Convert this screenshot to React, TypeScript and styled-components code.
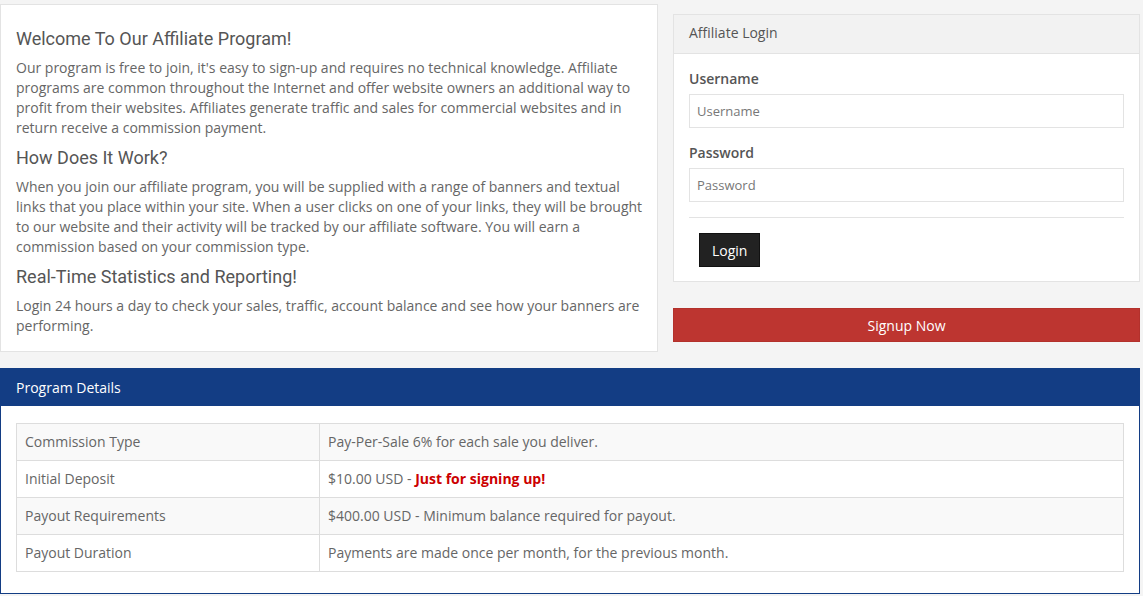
import React from 'react';
import styled, {createGlobalStyle} from 'styled-components';

const TEXT = '#666';
const BORDER = '#e3e3e3';
const NAVY = '#133d84';

const GlobalStyle = createGlobalStyle`
  html, body {
    margin: 0;
    padding: 0;
    background: #f4f4f4;
  }
  body {
    font-family: 'Open Sans', 'Liberation Sans', sans-serif;
    font-size: 14px;
    line-height: 20px;
    color: ${TEXT};
  }
  * {
    box-sizing: border-box;
  }
`;

const Page = styled.div`
  width: 1140px;
  padding-top: 4px;
`;

const TopRow = styled.div`
  display: grid;
  grid-template-columns: 658px 467px;
  column-gap: 15px;
  align-items: start;
`;

const InfoPanel = styled.section`
  background: #fff;
  border: 1px solid ${BORDER};
  padding: 23px 12px 15px 15px;
`;

const Heading = styled.h3`
  font-family: Roboto, 'Liberation Sans', sans-serif;
  font-weight: 400;
  font-size: 18px;
  line-height: 22px;
  color: #555;
  margin: 0 0 8px;
`;

const Text = styled.p`
  margin: 0 0 9px;

  &:last-child {
    margin-bottom: 0;
  }
`;

const SideColumn = styled.div`
  padding-top: 10px;
  display: flex;
  flex-direction: column;
  gap: 26px;
`;

const LoginPanel = styled.section`
  background: #fff;
  border: 1px solid ${BORDER};
`;

const LoginHeader = styled.header`
  background: #f2f2f2;
  border-bottom: 1px solid ${BORDER};
  height: 39px;
  padding: 0 15px 2px;
  display: flex;
  align-items: center;
  color: #555;
`;

const LoginBody = styled.div`
  padding: 15px 15px 14px;
`;

const Field = styled.div`
  display: flex;
  flex-direction: column;
  gap: 5px;
  margin-bottom: 15px;
`;

const Label = styled.label`
  font-weight: 600;
  color: #555;
`;

const Input = styled.input`
  height: 34px;
  border: 1px solid ${BORDER};
  padding: 0 7px;
  font-family: 'Open Sans', 'Liberation Sans', sans-serif;
  font-size: 13px;
  color: #555;
  outline: none;

  &::placeholder {
    color: #777;
  }
`;

const Divider = styled.hr`
  border: 0;
  border-top: 1px solid ${BORDER};
  margin: 0 0 15px;
`;

const LoginButton = styled.button`
  margin-left: 10px;
  height: 34px;
  padding: 0 12px;
  background: #222;
  color: #fff;
  border: 1px solid #111;
  font-family: 'Open Sans', 'Liberation Sans', sans-serif;
  font-size: 14px;
`;

const SignupButton = styled.button`
  height: 34px;
  width: 100%;
  background: #bd3530;
  border: 1px solid #b3312c;
  color: #fff;
  font-family: 'Open Sans', 'Liberation Sans', sans-serif;
  font-size: 14px;
`;

const DetailsPanel = styled.section`
  margin-top: 16px;
  border: 1px solid ${NAVY};
  background: #fff;
`;

const DetailsHeader = styled.header`
  background: ${NAVY};
  color: #fff;
  height: 37px;
  padding: 0 15px;
  display: flex;
  align-items: center;
`;

const DetailsBody = styled.div`
  padding: 17px 15px 21px;
`;

const Table = styled.table`
  width: 100%;
  border-collapse: collapse;
  border: 1px solid #ddd;
`;

const Row = styled.tr<{$striped: boolean}>`
  background: ${p => (p.$striped ? '#f9f9f9' : '#fff')};
`;

const Cell = styled.td<{$first?: boolean}>`
  border: 1px solid #ddd;
  height: 37px;
  padding: 0 8px;
  vertical-align: middle;
  width: ${p => (p.$first ? '303px' : 'auto')};
`;

const Highlight = styled.strong`
  color: #c00;
  font-weight: 700;
`;

const details: Array<[string, React.ReactNode]> = [
  ['Commission Type', 'Pay-Per-Sale 6% for each sale you deliver.'],
  [
    'Initial Deposit',
    <>
      $10.00 USD - <Highlight>Just for signing up!</Highlight>
    </>,
  ],
  ['Payout Requirements', '$400.00 USD - Minimum balance required for payout.'],
  ['Payout Duration', 'Payments are made once per month, for the previous month.'],
];

export default function App(): JSX.Element {
  return (
    <>
      <GlobalStyle />
      <Page>
        <TopRow>
          <InfoPanel>
            <Heading>Welcome To Our Affiliate Program!</Heading>
            <Text>
              Our program is free to join, it's easy to sign-up and requires no
              technical knowledge. Affiliate programs are common throughout the
              Internet and offer website owners an additional way to profit from
              their websites. Affiliates generate traffic and sales for commercial
              websites and in return receive a commission payment.
            </Text>
            <Heading>How Does It Work?</Heading>
            <Text>
              When you join our affiliate program, you will be supplied with a
              range of banners and textual links that you place within your site.
              When a user clicks on one of your links, they will be brought to our
              website and their activity will be tracked by our affiliate
              software. You will earn a commission based on your commission type.
            </Text>
            <Heading>Real-Time Statistics and Reporting!</Heading>
            <Text>
              Login 24 hours a day to check your sales, traffic, account balance
              and see how your banners are performing.
            </Text>
          </InfoPanel>
          <SideColumn>
            <LoginPanel>
              <LoginHeader>Affiliate Login</LoginHeader>
              <LoginBody>
                <Field>
                  <Label>Username</Label>
                  <Input placeholder="Username" />
                </Field>
                <Field>
                  <Label>Password</Label>
                  <Input type="password" placeholder="Password" />
                </Field>
                <Divider />
                <LoginButton>Login</LoginButton>
              </LoginBody>
            </LoginPanel>
            <SignupButton>Signup Now</SignupButton>
          </SideColumn>
        </TopRow>
        <DetailsPanel>
          <DetailsHeader>Program Details</DetailsHeader>
          <DetailsBody>
            <Table>
              <tbody>
                {details.map(([name, value], i) => (
                  <Row key={name} $striped={i % 2 === 0}>
                    <Cell $first>{name}</Cell>
                    <Cell>{value}</Cell>
                  </Row>
                ))}
              </tbody>
            </Table>
          </DetailsBody>
        </DetailsPanel>
      </Page>
    </>
  );
}
